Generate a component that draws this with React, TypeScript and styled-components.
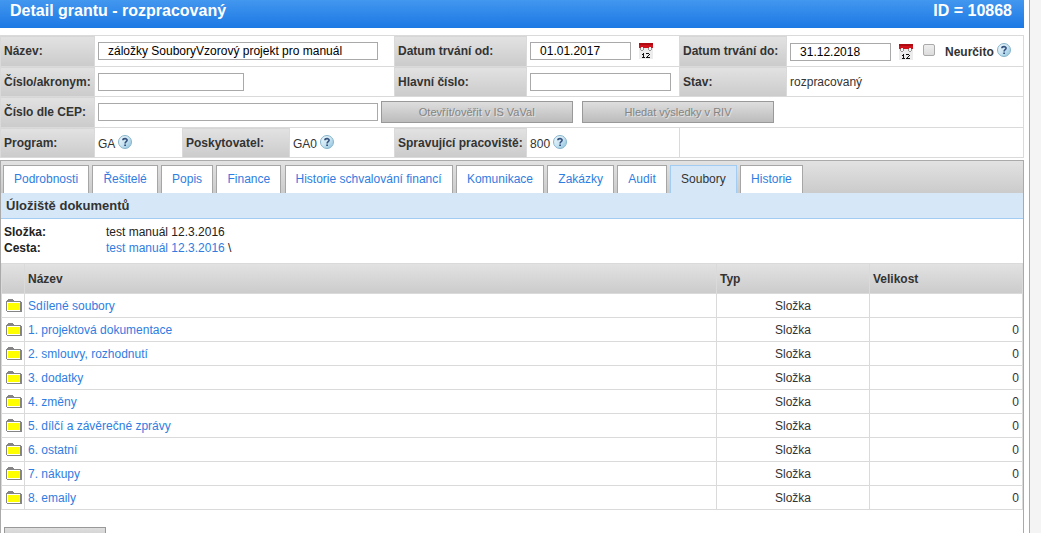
import React from "react";
import styled, { createGlobalStyle } from "styled-components";

const Global = createGlobalStyle`
  * { box-sizing: border-box; }
  html, body { margin: 0; background: #f4f4f4; }
  body, input, button, table {
    font-family: "Liberation Sans", Arial, sans-serif;
    font-size: 12px;
    line-height: 16px;
    color: #333;
  }
  a { color: #2f7de1; text-decoration: none; }
`;

const line = "#dadada";
const greyFill = "linear-gradient(#e2e2e2, #cbcbcb)";

const Page = styled.main`
  height: 100vh;
  overflow: hidden;
  margin-right: 11px;
  padding-right: 5px;
  background: #fff;
  border-right: 1px solid #aaa;
`;

const TitleBar = styled.header`
  display: flex;
  justify-content: space-between;
  height: 28px;
  padding: 0 12px 0 10px;
  background: linear-gradient(#4297ee, #1c78e4);
`;

const Title = styled.h1`
  margin: 0;
  font-size: 16px;
  line-height: 22px;
  font-weight: bold;
  color: #fff;
`;

const FormTable = styled.table`
  width: 100%;
  margin: 7px 0 2px;
  table-layout: fixed;
  border-collapse: collapse;
  td, th { border: 1px solid ${line}; height: 31px; padding: 0 3px; text-align: left; white-space: nowrap; }
  tr:nth-child(even) > * { height: 30px; }
`;

const LabelCell = styled.th`
  background: ${greyFill};
  font-weight: bold;
`;

const Inline = styled.div`
  display: flex;
  align-items: center;
`;

const CodeValue = styled(Inline)`
  padding-top: 2px;
`;

const TextBox = styled.input<{ $w: number }>`
  display: block;
  width: ${(p) => p.$w}px;
  height: 18px;
  padding: 0 9px;
  border: 1px solid #a9a9a9;
  background: #fff;
  color: #000;
  outline: none;
`;

const CalendarButton = styled.button`
  display: block;
  width: 14px;
  height: 16px;
  margin: 0 10px 0 8px;
  padding: 0;
  border: 0;
  background: none;
`;

const Tick = styled.input`
  width: 12px;
  height: 12px;
  margin: 0 10px 4px 0;
  appearance: none;
  border: 1px solid #aaa;
  border-radius: 2px;
  background: linear-gradient(#eee, #dcdcdc);
`;

const TickLabel = styled.label`
  font-weight: bold;
`;

const HelpButton = styled.button`
  display: block;
  width: 14px;
  height: 14px;
  margin: 0 0 4px 3px;
  padding: 0;
  border: 0;
  background: none;
`;

const GreyButton = styled.button<{ $w: number }>`
  width: ${(p) => p.$w}px;
  height: 22px;
  padding: 0;
  border: 1px solid #999;
  background: linear-gradient(#dedede, #bcbcbc);
  color: #222;
  font-size: 11px;
  &:disabled { color: #848484; text-shadow: 1px 1px 0 #e2e2e2; }
`;

const ButtonRow = styled.div`
  display: flex;
  align-items: center;
  gap: 9px;
  margin-left: 3px;
`;

const Panel = styled.section`
  border: 1px solid #aaa;
  border-bottom: 0;
`;

const Tabs = styled.nav`
  height: 32px;
  padding: 4px 0 0 2px;
  background: ${greyFill};
  white-space: nowrap;
`;

const Tab = styled.a<{ $active?: boolean }>`
  display: inline-block;
  height: 28px;
  padding: 5px 10px 0;
  border: 1px solid ${(p) => (p.$active ? "#a2ccf2" : "#a6a6a6")};
  border-bottom: 0;
  background: ${(p) => (p.$active ? "#d6e8f8" : "#fff")};
  color: ${(p) => (p.$active ? "#333" : "#2f7de1")};
`;

const PanelTitle = styled.h2`
  margin: 0;
  height: 26px;
  padding: 0 5px;
  font-size: 13px;
  line-height: 25px;
  background: #d6e8f8;
  border-bottom: 1px solid #a2ccf2;
`;

const Info = styled.dl`
  display: grid;
  grid-template-columns: 102px 1fr;
  margin: 0;
  padding: 5px 3px 7px;
  color: #222;
  dt { font-weight: bold; }
  dd { margin: 0; }
`;

const FileTable = styled.table`
  width: 100%;
  table-layout: fixed;
  border-collapse: collapse;
  th, td { height: 24px; padding: 0 3px; border: 1px solid ${line}; text-align: left; }
  thead th { height: 30px; }
  thead tr { background: ${greyFill}; }
  td:nth-child(1) { padding: 0 0 0 4px; }
  td:nth-child(3) { text-align: center; }
  td:nth-child(4) { text-align: right; }
  td svg { display: block; }
`;

const Actions = styled.div`
  padding: 17px 3px;
`;

const CalendarIcon = () => (
  <svg width="14" height="16" viewBox="0 0 14 16" shapeRendering="crispEdges" aria-hidden="true">
    <path d="M0 5h14v11H0z" fill="#ececec" />
    <path d="M0 0h14v5H0z" fill="#d0121c" />
    <path d="M0 0h14v2H0z" fill="#b00a12" />
    <path d="M2 4h2v3H2zM10 4h2v3h-2z" fill="#f4f4f4" />
    <path d="M1 5h1v2H1zM4 5h1v2H4zM9 5h1v2H9zM12 5h1v2h-1zM2 7h2v1H2zM10 7h2v1h-2z" fill="#999" />
    <path d="M4 10h1v5H4zM3 11h1v1H3zM3 14h3v1H3zM7 10h3v1H7zM10 11h1v1h-1zM9 12h1v1H9zM8 13h1v1H8zM7 14h4v1H7z" fill="#111" />
  </svg>
);

const HelpIcon = () => (
  <svg width="14" height="14" viewBox="0 0 14 14" aria-hidden="true">
    <defs>
      <linearGradient id="help" x1="0" y1="0" x2="1" y2="1">
        <stop offset="0" stopColor="#f4fafd" />
        <stop offset="0.5" stopColor="#cbe5f2" />
        <stop offset="1" stopColor="#86bedb" />
      </linearGradient>
    </defs>
    <circle cx="7" cy="7" r="6.5" fill="url(#help)" stroke="#86b4cb" strokeWidth="1" />
    <path d="M4.9 5.2C5 3.1 9.2 3.1 9.1 5.3 9 6.7 7.1 6.7 7.1 8.4" fill="none" stroke="#34507e" strokeWidth="1.6" />
    <path d="M6.2 9.4h1.8v1.7H6.2z" fill="#34507e" />
  </svg>
);

const FolderIcon = () => (
  <svg width="16" height="13" viewBox="0 0 16 13" shapeRendering="crispEdges" aria-hidden="true">
    <path d="M2 0h5v1h1v1h7v1h1v10H1v-1H0V2h1V1h1z" fill="#858585" />
    <path d="M1 3h13v9H1z" fill="#fff" />
    <path d="M2 4h12v7H2z" fill="#ff0" />
  </svg>
);

const Help = () => (
  <HelpButton type="button" aria-label="Nápověda"><HelpIcon /></HelpButton>
);

const Calendar = () => (
  <CalendarButton type="button" aria-label="Kalendář"><CalendarIcon /></CalendarButton>
);

const tabs = [
  "Podrobnosti", "Řešitelé", "Popis", "Finance", "Historie schvalování financí",
  "Komunikace", "Zakázky", "Audit", "Soubory", "Historie",
];

const folders = [
  "Sdílené soubory", "1. projektová dokumentace", "2. smlouvy, rozhodnutí", "3. dodatky",
  "4. změny", "5. dílčí a závěrečné zprávy", "6. ostatní", "7. nákupy", "8. emaily",
];

export default function App() {
  return (
    <>
      <Global />
      <Page>
        <TitleBar>
          <Title>Detail grantu - rozpracovaný</Title>
          <Title as="div">ID = 10868</Title>
        </TitleBar>

        <FormTable>
          <colgroup>
            <col style={{ width: 94 }} />
            <col style={{ width: 88 }} />
            <col style={{ width: 107 }} />
            <col style={{ width: 105 }} />
            <col style={{ width: 132 }} />
            <col style={{ width: 153 }} />
            <col style={{ width: 107 }} />
            <col />
          </colgroup>
          <tbody>
            <tr>
              <LabelCell scope="row"><label htmlFor="name">Název:</label></LabelCell>
              <td colSpan={3}><TextBox id="name" $w={280} defaultValue="záložky SouboryVzorový projekt pro manuál" /></td>
              <LabelCell scope="row"><label htmlFor="from">Datum trvání od:</label></LabelCell>
              <td><Inline><TextBox id="from" $w={101} defaultValue="01.01.2017" /><Calendar /></Inline></td>
              <LabelCell scope="row"><label htmlFor="to">Datum trvání do:</label></LabelCell>
              <td>
                <CodeValue>
                  <TextBox id="to" $w={101} defaultValue="31.12.2018" />
                  <Calendar />
                  <Tick type="checkbox" id="open" />
                  <TickLabel htmlFor="open">Neurčito</TickLabel>
                  <Help />
                </CodeValue>
              </td>
            </tr>
            <tr>
              <LabelCell scope="row"><label htmlFor="acronym">Číslo/akronym:</label></LabelCell>
              <td colSpan={3}><TextBox id="acronym" $w={146} /></td>
              <LabelCell scope="row"><label htmlFor="main">Hlavní číslo:</label></LabelCell>
              <td><TextBox id="main" $w={141} /></td>
              <LabelCell scope="row">Stav:</LabelCell>
              <td>rozpracovaný</td>
            </tr>
            <tr>
              <LabelCell scope="row"><label htmlFor="cep">Číslo dle CEP:</label></LabelCell>
              <td colSpan={7}>
                <Inline>
                  <TextBox id="cep" $w={280} />
                  <ButtonRow>
                    <GreyButton type="button" $w={192} disabled>Otevřít/ověřit v IS VaVaI</GreyButton>
                    <GreyButton type="button" $w={192} disabled>Hledat výsledky v RIV</GreyButton>
                  </ButtonRow>
                </Inline>
              </td>
            </tr>
            <tr>
              <LabelCell scope="row">Program:</LabelCell>
              <td><CodeValue>GA<Help /></CodeValue></td>
              <LabelCell scope="row">Poskytovatel:</LabelCell>
              <td><CodeValue>GA0<Help /></CodeValue></td>
              <LabelCell scope="row">Spravující pracoviště:</LabelCell>
              <td><CodeValue>800<Help /></CodeValue></td>
              <td colSpan={2} />
            </tr>
          </tbody>
        </FormTable>

        <Panel>
          <Tabs>
            {tabs.map((t) => (
              <React.Fragment key={t}>
                <Tab href="#" $active={t === "Soubory"}>{t}</Tab>{" "}
              </React.Fragment>
            ))}
          </Tabs>
          <PanelTitle>Úložiště dokumentů</PanelTitle>
          <Info>
            <dt>Složka:</dt>
            <dd>test manuál 12.3.2016</dd>
            <dt>Cesta:</dt>
            <dd><a href="#">test manuál 12.3.2016</a> \</dd>
          </Info>
          <FileTable>
            <colgroup>
              <col style={{ width: 23 }} />
              <col />
              <col style={{ width: 153 }} />
              <col style={{ width: 153 }} />
            </colgroup>
            <thead>
              <tr>
                <th aria-label="Ikona" />
                <th>Název</th>
                <th>Typ</th>
                <th>Velikost</th>
              </tr>
            </thead>
            <tbody>
              {folders.map((f, i) => (
                <tr key={f}>
                  <td><FolderIcon /></td>
                  <td><a href="#">{f}</a></td>
                  <td>Složka</td>
                  <td>{i > 0 ? "0" : ""}</td>
                </tr>
              ))}
            </tbody>
          </FileTable>
          <Actions>
            <GreyButton type="button" $w={102}>Nová složka</GreyButton>
          </Actions>
        </Panel>
      </Page>
    </>
  );
}
